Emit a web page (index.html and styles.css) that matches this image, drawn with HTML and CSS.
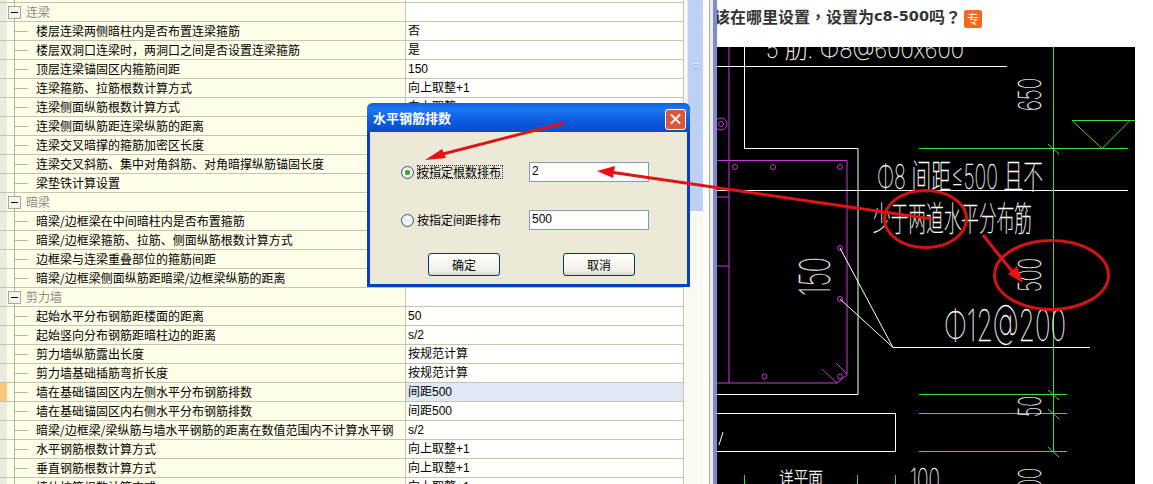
FILE: index.html
```html
<!DOCTYPE html>
<html lang="en">

<head>
    <meta charset="UTF-8">
    <title>水平钢筋排数</title>
    <link rel="stylesheet" href="styles.css">
</head>

<body>
    <div class="page">
        <div class="sheet">
            <div class="row cut"><div class="gutter"></div><div class="name"></div><div class="value"></div></div>
            <div class="row group"><div class="gutter"></div><div class="name"><span class="minus"></span>连梁</div><div class="value"></div></div>
            <div class="row"><div class="gutter"></div><div class="name">楼层连梁两侧暗柱内是否布置连梁箍筋</div><div class="value">否</div></div>
            <div class="row"><div class="gutter"></div><div class="name">楼层双洞口连梁时，两洞口之间是否设置连梁箍筋</div><div class="value">是</div></div>
            <div class="row"><div class="gutter"></div><div class="name">顶层连梁锚固区内箍筋间距</div><div class="value">150</div></div>
            <div class="row"><div class="gutter"></div><div class="name">连梁箍筋、拉筋根数计算方式</div><div class="value">向上取整+1</div></div>
            <div class="row"><div class="gutter"></div><div class="name">连梁侧面纵筋根数计算方式</div><div class="value">向上取整</div></div>
            <div class="row"><div class="gutter"></div><div class="name">连梁侧面纵筋距连梁纵筋的距离</div><div class="value"></div></div>
            <div class="row"><div class="gutter"></div><div class="name">连梁交叉暗撑的箍筋加密区长度</div><div class="value"></div></div>
            <div class="row"><div class="gutter"></div><div class="name">连梁交叉斜筋、集中对角斜筋、对角暗撑纵筋锚固长度</div><div class="value"></div></div>
            <div class="row"><div class="gutter"></div><div class="name">梁垫铁计算设置</div><div class="value"></div></div>
            <div class="row group"><div class="gutter"></div><div class="name"><span class="minus"></span>暗梁</div><div class="value"></div></div>
            <div class="row"><div class="gutter"></div><div class="name">暗梁/边框梁在中间暗柱内是否布置箍筋</div><div class="value"></div></div>
            <div class="row"><div class="gutter"></div><div class="name">暗梁/边框梁箍筋、拉筋、侧面纵筋根数计算方式</div><div class="value"></div></div>
            <div class="row"><div class="gutter"></div><div class="name">边框梁与连梁重叠部位的箍筋间距</div><div class="value"></div></div>
            <div class="row"><div class="gutter"></div><div class="name">暗梁/边框梁侧面纵筋距暗梁/边框梁纵筋的距离</div><div class="value"></div></div>
            <div class="row group"><div class="gutter"></div><div class="name"><span class="minus"></span>剪力墙</div><div class="value"></div></div>
            <div class="row"><div class="gutter"></div><div class="name">起始水平分布钢筋距楼面的距离</div><div class="value">50</div></div>
            <div class="row"><div class="gutter"></div><div class="name">起始竖向分布钢筋距暗柱边的距离</div><div class="value">s/2</div></div>
            <div class="row"><div class="gutter"></div><div class="name">剪力墙纵筋露出长度</div><div class="value">按规范计算</div></div>
            <div class="row"><div class="gutter"></div><div class="name">剪力墙基础插筋弯折长度</div><div class="value">按规范计算</div></div>
            <div class="row active"><div class="gutter"></div><div class="name">墙在基础锚固区内左侧水平分布钢筋排数</div><div class="value">间距500</div></div>
            <div class="row"><div class="gutter"></div><div class="name">墙在基础锚固区内右侧水平分布钢筋排数</div><div class="value">间距500</div></div>
            <div class="row"><div class="gutter"></div><div class="name">暗梁/边框梁/梁纵筋与墙水平钢筋的距离在数值范围内不计算水平钢</div><div class="value">s/2</div></div>
            <div class="row"><div class="gutter"></div><div class="name">水平钢筋根数计算方式</div><div class="value">向上取整+1</div></div>
            <div class="row"><div class="gutter"></div><div class="name">垂直钢筋根数计算方式</div><div class="value">向上取整+1</div></div>
            <div class="row"><div class="gutter"></div><div class="name">墙体拉筋根数计算方式</div><div class="value">向上取整+1</div></div>
        </div>

        <div class="scroll">
            <div class="thumb"><span class="grip"></span></div>
        </div>
        <div class="edge"></div>

        <div class="post">
            <h2 class="post-title">该在哪里设置，设置为<span class="latin">c8-500</span>吗？<span class="badge">专</span></h2>
            <svg class="cad" viewBox="717 47 418 437" width="418" height="437">
                <g class="pink">
                    <path d="M729 47V383M717 160.500H847V375L837 383H717M717 197H729M717 266H729"/>
                    <path d="M822 369L837 383M836 363L847 374"/>
                    <circle cx="721" cy="124" r="2.500"/>
                    <circle cx="721" cy="124" r="6"/>
                    <circle cx="735" cy="167" r="2.500"/>
                    <circle cx="773" cy="167" r="2.500"/>
                    <circle cx="840" cy="167" r="2.500"/>
                    <circle cx="840" cy="248" r="2.500"/>
                    <circle cx="840" cy="299" r="2.500"/>
                    <circle cx="764.500" cy="376.500" r="2.500"/>
                    <circle cx="840" cy="376.500" r="2.500"/>
                </g>
                <g class="white">
                    <path d="M717 66.500H1007M744.500 47V148.500H858V394.500H717M717 190.500H1128"/>
                    <path d="M840 248L893 347.500M840 299L893 347.500H1090"/>
                    <path d="M717 413.500H895.500V451.500H717M719 445L723 432"/>
                </g>
                <g class="green">
                    <path d="M1053.500 47V452M919 148.500H1128M1072 120.500H1135M1072 120.500L1102 148.500L1130 120.500"/>
                    <path d="M919 394.500H1067M919 413.500H1067M919 451.500H1067"/>
                    <path d="M1048 144L1059 154M1048 390L1059 400M1048 409L1059 419M1048 447L1059 457"/>
                    <path d="M744.500 475V484M857.500 475V484M895.500 475V484"/>
                </g>
                <g class="cad-text">
                    <text x="766" y="58" textLength="198" lengthAdjust="spacingAndGlyphs" font-size="24">5 肋. Φ8@600x600</text>
                    <text x="877" y="189" textLength="166" lengthAdjust="spacingAndGlyphs" font-size="34">Φ8 间距≤500 且不</text>
                    <text x="873" y="231" textLength="159" lengthAdjust="spacingAndGlyphs" font-size="34">少于两道水平分布筋</text>
                    <text x="944" y="341" textLength="122" lengthAdjust="spacingAndGlyphs" font-size="44">Φ12@200</text>
                    <text x="779" y="484" textLength="44" lengthAdjust="spacingAndGlyphs" font-size="17">详平面</text>
                    <text x="910" y="490" textLength="30" lengthAdjust="spacingAndGlyphs" font-size="30">100</text>
                    <text transform="translate(1041 111) rotate(-90)" textLength="33" lengthAdjust="spacingAndGlyphs" font-size="31">650</text>
                    <text transform="translate(830 296) rotate(-90)" textLength="39" lengthAdjust="spacingAndGlyphs" font-size="42">150</text>
                    <text transform="translate(1041 292) rotate(-90)" textLength="34" lengthAdjust="spacingAndGlyphs" font-size="31">500</text>
                    <text transform="translate(1041 417) rotate(-90)" textLength="21" lengthAdjust="spacingAndGlyphs" font-size="31">50</text>
                    <text transform="translate(1041 490) rotate(-90)" textLength="22" lengthAdjust="spacingAndGlyphs" font-size="31">00</text>
                </g>
            </svg>
        </div>

        <div class="dialog">
            <div class="dialog-title">水平钢筋排数<span class="close"></span></div>
            <div class="dialog-body">
                <div class="option">
                    <span class="radio on"></span>
                    <span class="label focus">按指定根数排布</span>
                    <span class="field">2</span>
                </div>
                <div class="option">
                    <span class="radio"></span>
                    <span class="label">按指定间距排布</span>
                    <span class="field">500</span>
                </div>
                <div class="actions">
                    <button>确定</button>
                    <button>取消</button>
                </div>
            </div>
        </div>

        <svg class="marks" viewBox="0 0 1153 484" width="1153" height="484">
            <ellipse cx="925.500" cy="219" rx="41" ry="28.500"/>
            <ellipse cx="1051.500" cy="275" rx="57" ry="34.500"/>
            <path class="shaft" d="M564 123L435 156"/>
            <path class="head" d="M425 160L442 149L446 158Z"/>
            <path class="shaft" d="M932 219L610 172"/>
            <path class="head" d="M597 171L615 166L613 178Z"/>
            <path class="shaft" d="M983 235L1015 275"/>
            <path class="head" d="M1023 283L1008 274L1017 266Z"/>
        </svg>
    </div>
</body>

</html>
```
FILE: styles.css
```css
body {
    margin: 0;
    background-color: #fff;
    font-family: "Noto Sans CJK SC", "Liberation Sans", sans-serif;
    font-size: 12px;
    color: #000;
}

.page {
    position: relative;
    display: flex;
    width: 1153px;
    height: 484px;
    overflow: hidden;
}

/* property sheet */
.sheet {
    width: 684px;
    flex: none;
    border-right: 1px solid #c4c4b4;
    box-sizing: border-box;
}

.row {
    display: flex;
    height: 19px;
    box-sizing: border-box;
    border-bottom: 1px solid #c4c4b4;
    line-height: 18px;
}

.row.cut {
    height: 3px;
}

.gutter {
    width: 7px;
    flex: none;
    background-color: #ebeadf;
}

.name {
    position: relative;
    width: 399px;
    flex: none;
    padding-left: 29px;
    box-sizing: border-box;
    background-color: #ffffe9;
    border-right: 1px solid #c4c4b4;
    white-space: nowrap;
}

.name::before {
    content: "";
    position: absolute;
    left: 7px;
    top: 0;
    bottom: -1px;
    border-left: 1px solid #b4b4a4;
}

.name::after {
    content: "";
    position: absolute;
    left: 8px;
    top: 9px;
    width: 13px;
    border-top: 1px solid #b4b4a4;
}

.cut .name::after,
.group .name::after {
    display: none;
}

.group .name {
    color: #8a8a80;
    padding-left: 19px;
}

.minus {
    position: absolute;
    left: 1px;
    top: 3px;
    width: 11px;
    height: 11px;
    border: 1px solid #a8a8a0;
    background-color: #f4f4ec;
    z-index: 1;
}

.minus::after {
    content: "";
    position: absolute;
    left: 2px;
    top: 5px;
    width: 7px;
    border-top: 1px solid #000;
}

.value {
    flex: 1;
    padding-left: 2px;
    background-color: #fffffb;
    font-family: "Liberation Sans", "Noto Sans CJK SC", sans-serif;
}

.active .gutter {
    background-color: #f9c77c;
}

.active .value {
    background-color: #dfe8f4;
}

/* scrollbar and splitter */
.scroll {
    width: 19px;
    flex: none;
    padding-left: 3px;
    box-sizing: border-box;
    background-color: #fbfaf2;
}

.thumb {
    display: flex;
    justify-content: center;
    height: 211px;
    padding-top: 63px;
    box-sizing: border-box;
    background-color: #bfd0f5;
    border-left: 1px solid #dfe8fb;
}

.grip {
    width: 6px;
    height: 6px;
    background: repeating-linear-gradient(#eef3fd 0 1px, #9db1de 1px 2px);
}

.edge {
    width: 14px;
    flex: none;
    background: linear-gradient(to right, #fff 0 6px, #a9a9a6 6px 7px, #ecebe4 7px 10px, #7f8cc8 10px 14px);
}

/* right side post */
.post {
    width: 433px;
    flex: none;
    overflow: hidden;
}

.post-title {
    display: flex;
    align-items: center;
    height: 47px;
    margin: 0 0 0 -3px;
    padding-bottom: 15px;
    box-sizing: border-box;
    font-family: "Noto Sans CJK TC", sans-serif;
    font-size: 16px;
    line-height: 32px;
    font-weight: bold;
    color: #333;
    white-space: nowrap;
}

.latin {
    font-family: "DejaVu Sans", sans-serif;
    font-size: 14.500px;
}

.badge {
    width: 18px;
    height: 18px;
    margin: 6px 0 0 3px;
    border-radius: 2px;
    background-color: #f5671f;
    color: #fff;
    font-size: 12px;
    font-weight: normal;
    line-height: 18px;
    text-align: center;
}

.cad {
    display: block;
    background-color: #000;
}

.cad path,
.cad circle {
    fill: none;
    stroke-width: 1;
}

.pink path,
.pink circle {
    stroke: #c838d8;
}

.white path {
    stroke: #fff;
}

.green path {
    stroke: #3cdc3c;
}

.cad-text text {
    fill: #fff;
    stroke: #fff;
    stroke-width: 0.300;
    font-family: Inter, "Noto Sans CJK SC", sans-serif;
    font-weight: 100;
}

/* dialog */
.dialog {
    position: absolute;
    left: 367px;
    top: 103px;
    width: 323px;
    height: 184px;
    box-sizing: border-box;
    display: flex;
    flex-direction: column;
    border-radius: 6px 6px 0 0;
    background-color: #0a3fc4;
    padding: 0 3px 3px;
}

.dialog-title {
    position: relative;
    height: 29px;
    flex: none;
    margin: 0 -3px;
    padding-left: 6px;
    border-radius: 6px 6px 0 0;
    background: linear-gradient(#0c5fe4, #1c78f2 20%, #0a58dc 70%, #0a4cc8);
    color: #fff;
    font-size: 13px;
    font-weight: bold;
    line-height: 29px;
}

.close {
    position: absolute;
    right: 4px;
    top: 6px;
    width: 19px;
    height: 19px;
    border: 1px solid #fff;
    border-radius: 3px;
    background-color: #d9583a;
}

.close::before,
.close::after {
    content: "";
    position: absolute;
    left: 3px;
    top: 8px;
    width: 13px;
    height: 2px;
    background-color: #fff;
    transform: rotate(45deg);
}

.close::after {
    transform: rotate(-45deg);
}

.dialog-body {
    flex: 1;
    padding: 30px 38px 0 31px;
    background-color: #ece9d8;
}

.option {
    display: flex;
    align-items: center;
    height: 20px;
    margin-bottom: 28px;
}

.radio {
    width: 11px;
    height: 11px;
    flex: none;
    border: 1px solid #39506e;
    border-radius: 50%;
    background-color: #f4f4ee;
}

.radio.on {
    background: radial-gradient(circle, #3aa83a 0 2.500px, #f4f4ee 3px);
}

.label {
    width: 86px;
    flex: none;
    margin: 0 26px 0 3px;
    line-height: 14px;
}

.label.focus {
    outline: 1px dotted #333;
    outline-offset: -1px;
}

.field {
    width: 121px;
    height: 20px;
    box-sizing: border-box;
    padding-left: 2px;
    border: 1px solid #7f9db9;
    background-color: #fff;
    font-family: "Liberation Sans", sans-serif;
    line-height: 17px;
}

.actions {
    display: flex;
    justify-content: space-between;
    margin: -5px 0 0 27px;
    width: 207px;
}

button {
    width: 72px;
    height: 23px;
    padding: 0;
    border: 1px solid #003c74;
    border-radius: 3px;
    background: linear-gradient(#fff, #f0efe6 80%, #d8d4c8);
    font-family: "Noto Sans CJK SC", sans-serif;
    font-size: 12px;
    color: #000;
}

/* red markup on top */
.marks {
    position: absolute;
    left: 0;
    top: 0;
    pointer-events: none;
}

.marks ellipse {
    fill: none;
    stroke: #d41414;
    stroke-width: 3;
}

.shaft {
    fill: none;
    stroke: #e01414;
    stroke-width: 3;
}

.head {
    fill: #ec1010;
}
```
